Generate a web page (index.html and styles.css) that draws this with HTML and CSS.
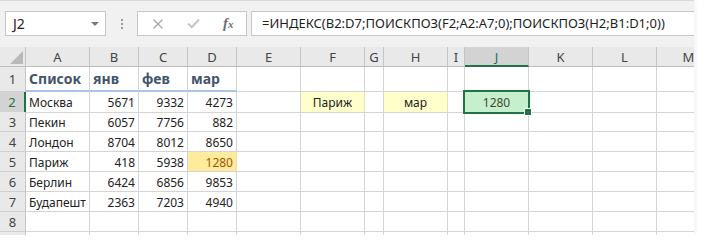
FILE: index.html
```html
<!DOCTYPE html>
<html lang="ru">
<head>
    <meta charset="UTF-8">
    <title>Excel — ИНДЕКС и ПОИСКПОЗ</title>
    <link rel="stylesheet" href="styles.css">
</head>
<body>
<div class="window">
    <!-- formula bar -->
    <div class="formula-bar">
        <div class="name-box"><span>J2</span><span class="arrow"></span></div>
        <div class="grip"><i></i><i></i><i></i></div>
        <div class="fx-buttons">
            <svg class="cancel" width="12" height="12" viewBox="0 0 12 12"><path d="M1.5 1.5 L10.5 10.5 M10.5 1.5 L1.5 10.5" stroke="#a9a9a9" stroke-width="1.4" fill="none"/></svg>
            <svg class="enter" width="13" height="11" viewBox="0 0 13 11"><path d="M1 5.5 L4.8 9.2 L12 1.5" stroke="#c6c6c6" stroke-width="2" fill="none"/></svg>
            <span class="fx">f<small>x</small></span>
        </div>
        <div class="formula">=ИНДЕКС(B2:D7;ПОИСКПОЗ(F2;A2:A7;0);ПОИСКПОЗ(H2;B1:D1;0))</div>
    </div>

    <!-- grid -->
    <div class="sheet">
        <div class="row head">
            <div class="corner"></div><div>A</div><div>B</div><div>C</div><div>D</div><div>E</div><div>F</div><div>G</div><div>H</div><div>I</div><div class="active">J</div><div>K</div><div>L</div><div>M</div>
        </div>
        <div class="row r1">
            <div class="rh">1</div><div class="title">Список</div><div class="title">янв</div><div class="title">фев</div><div class="title">мар</div><div></div><div></div><div></div><div></div><div></div><div></div><div></div><div></div><div></div>
        </div>
        <div class="row">
            <div class="rh active">2</div><div>Москва</div><div class="num">5671</div><div class="num">9332</div><div class="num">4273</div><div></div><div class="input">Париж</div><div></div><div class="input">мар</div><div></div><div class="result">1280</div><div></div><div></div><div></div>
        </div>
        <div class="row">
            <div class="rh">3</div><div>Пекин</div><div class="num">6057</div><div class="num">7756</div><div class="num">882</div><div></div><div></div><div></div><div></div><div></div><div></div><div></div><div></div><div></div>
        </div>
        <div class="row">
            <div class="rh">4</div><div>Лондон</div><div class="num">8704</div><div class="num">8012</div><div class="num">8650</div><div></div><div></div><div></div><div></div><div></div><div></div><div></div><div></div><div></div>
        </div>
        <div class="row">
            <div class="rh">5</div><div>Париж</div><div class="num">418</div><div class="num">5938</div><div class="num found">1280</div><div></div><div></div><div></div><div></div><div></div><div></div><div></div><div></div><div></div>
        </div>
        <div class="row">
            <div class="rh">6</div><div>Берлин</div><div class="num">6424</div><div class="num">6856</div><div class="num">9853</div><div></div><div></div><div></div><div></div><div></div><div></div><div></div><div></div><div></div>
        </div>
        <div class="row">
            <div class="rh">7</div><div class="clip">Будапешт</div><div class="num">2363</div><div class="num">7203</div><div class="num">4940</div><div></div><div></div><div></div><div></div><div></div><div></div><div></div><div></div><div></div>
        </div>
        <div class="row">
            <div class="rh">8</div><div></div><div></div><div></div><div></div><div></div><div></div><div></div><div></div><div></div><div></div><div></div><div></div><div></div>
        </div>
        <div class="row">
            <div class="rh"></div><div></div><div></div><div></div><div></div><div></div><div></div><div></div><div></div><div></div><div></div><div></div><div></div><div></div>
        </div>
    </div>
</div>
</body>
</html>
```

FILE: styles.css
```css
* {
    box-sizing: border-box;
}

body {
    margin: 0;
    background: #fff;
    font-family: "Noto Sans", "Open Sans", sans-serif;
    color: #222;
}

.window {
    width: 694px;
    height: 235px;
    overflow: hidden;
    background: #fff;
    box-shadow: 1px 1px 4px rgba(0, 0, 0, 0.07);
}

/* ---- formula bar ---- */

.formula-bar {
    height: 47px;
    background: #f1f1f1;
    border-top: 1px solid #d9d9d9;
    display: flex;
    align-items: flex-start;
    padding: 10px 0 0 5px;
}

.name-box {
    width: 101px;
    height: 25px;
    background: #fff;
    border: 1px solid #c6c6c6;
    display: flex;
    align-items: center;
    justify-content: space-between;
    padding: 0 6px 0 7px;
    font-size: 14px;
    color: #222;
}

.name-box .arrow {
    width: 0;
    height: 0;
    border-left: 4px solid transparent;
    border-right: 4px solid transparent;
    border-top: 4px solid #7b7b7b;
}

.grip {
    width: 31px;
    height: 25px;
    display: flex;
    flex-direction: column;
    align-items: center;
    justify-content: center;
    gap: 2px;
}

.grip i {
    display: block;
    width: 2px;
    height: 2px;
    background: #9a9a9a;
}

.fx-buttons {
    width: 110px;
    height: 25px;
    background: #fff;
    border: 1px solid #c6c6c6;
    display: flex;
    align-items: center;
    padding-left: 14px;
}

.fx-buttons .enter {
    margin-left: 23px;
}

.fx-buttons .fx {
    margin-left: 23px;
    font-family: "Liberation Serif", serif;
    font-style: italic;
    font-weight: bold;
    font-size: 15px;
    color: #6e6e6e;
}

.fx-buttons .fx small {
    font-size: 11px;
}

.formula {
    flex: 1;
    height: 25px;
    margin-left: 4px;
    background: #fff;
    border: 1px solid #c6c6c6;
    border-right: none;
    padding-left: 10px;
    font-size: 13px;
    line-height: 23px;
    white-space: nowrap;
    color: #1e1e1e;
}

/* ---- sheet ---- */

.row {
    display: grid;
    grid-template-columns: 26px 64px 49px 49px 49px 64px 64px 19px 64px 17px 64px 64px 64px 64px;
    height: 20px;
}

.row > div {
    border-right: 1px solid #d4d4d4;
    border-bottom: 1px solid #d4d4d4;
    font-size: 12px;
    line-height: 19px;
    padding: 1px 3px 0 3px;
    white-space: nowrap;
    overflow: hidden;
}

.row .rh {
    background: #e9e9e9;
    border-right-color: #c4c4c4;
    border-bottom-color: #d0d0d0;
    text-align: center;
    padding: 1px 0 0 0;
    font-size: 13px;
    color: #444;
}

.row .rh.active {
    background: #d3d3d3;
    border-right: 2px solid #217346;
    color: #217346;
}

.head > div {
    background: #e9e9e9;
    border-right-color: #c4c4c4;
    border-bottom-color: #bdbdbd;
    text-align: center;
    font-size: 13px;
    color: #444;
    padding: 1px 0 0 0;
}

.head .corner {
    position: relative;
    background: #e9e9e9;
}

.head .corner::after {
    content: "";
    position: absolute;
    right: 2px;
    bottom: 2px;
    border-left: 13px solid transparent;
    border-bottom: 13px solid #b9b9b9;
}

.head .active {
    background: #d3d3d3;
    border-bottom: 2px solid #217346;
    color: #217346;
}

.r1 {
    height: 25px;
}

.r1 > div {
    line-height: 22px;
    padding-top: 1px;
}

.r1 .title {
    font-size: 14px;
    font-weight: bold;
    color: #44546a;
    border-bottom: 2px solid #a9c5e6;
    padding-left: 3px;
}

.num {
    text-align: right;
}

.row .clip {
    text-overflow: clip;
}

.row .input {
    background: #ffffcc;
    border-right-color: #e3e3b8;
    text-align: center;
}

.row .found {
    background: #ffeb9c;
    border-right-color: #f1dd96;
    color: #9c5700;
}

.row .result {
    position: relative;
    overflow: visible;
    background: #c6efce;
    text-align: center;
    color: #3f4a33;
}

.row .result::before {
    content: "";
    position: absolute;
    left: -2px;
    top: -2px;
    right: -2px;
    bottom: -2px;
    border: 2px solid #217346;
}

.row .result::after {
    content: "";
    position: absolute;
    right: -4px;
    bottom: -4px;
    width: 6px;
    height: 6px;
    background: #217346;
    border: 1px solid #fff;
}
```
